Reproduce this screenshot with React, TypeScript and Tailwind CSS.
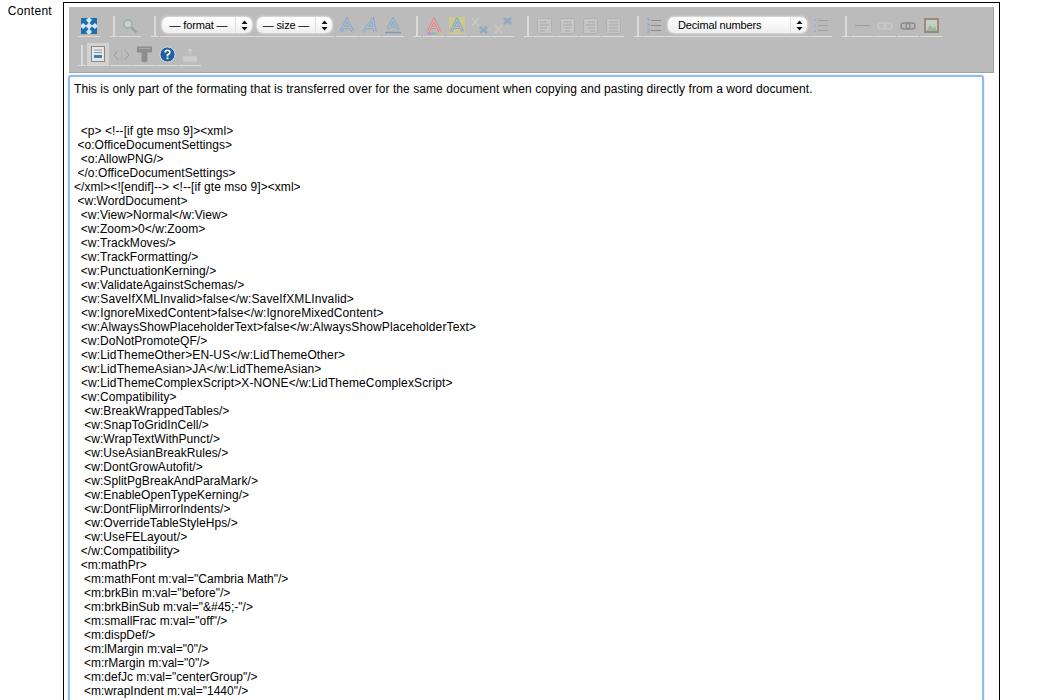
const lines = [
  "",
  "",
  "  <p> <!--[if gte mso 9]><xml>",
  " <o:OfficeDocumentSettings>",
  "  <o:AllowPNG/>",
  " </o:OfficeDocumentSettings>",
  "</xml><![endif]--> <!--[if gte mso 9]><xml>",
  " <w:WordDocument>",
  "  <w:View>Normal</w:View>",
  "  <w:Zoom>0</w:Zoom>",
  "  <w:TrackMoves/>",
  "  <w:TrackFormatting/>",
  "  <w:PunctuationKerning/>",
  "  <w:ValidateAgainstSchemas/>",
  "  <w:SaveIfXMLInvalid>false</w:SaveIfXMLInvalid>",
  "  <w:IgnoreMixedContent>false</w:IgnoreMixedContent>",
  "  <w:AlwaysShowPlaceholderText>false</w:AlwaysShowPlaceholderText>",
  "  <w:DoNotPromoteQF/>",
  "  <w:LidThemeOther>EN-US</w:LidThemeOther>",
  "  <w:LidThemeAsian>JA</w:LidThemeAsian>",
  "  <w:LidThemeComplexScript>X-NONE</w:LidThemeComplexScript>",
  "  <w:Compatibility>",
  "   <w:BreakWrappedTables/>",
  "   <w:SnapToGridInCell/>",
  "   <w:WrapTextWithPunct/>",
  "   <w:UseAsianBreakRules/>",
  "   <w:DontGrowAutofit/>",
  "   <w:SplitPgBreakAndParaMark/>",
  "   <w:EnableOpenTypeKerning/>",
  "   <w:DontFlipMirrorIndents/>",
  "   <w:OverrideTableStyleHps/>",
  "   <w:UseFELayout/>",
  "  </w:Compatibility>",
  "  <m:mathPr>",
  "   <m:mathFont m:val=\"Cambria Math\"/>",
  "   <m:brkBin m:val=\"before\"/>",
  "   <m:brkBinSub m:val=\"&#45;-\"/>",
  "   <m:smallFrac m:val=\"off\"/>",
  "   <m:dispDef/>",
  "   <m:lMargin m:val=\"0\"/>",
  "   <m:rMargin m:val=\"0\"/>",
  "   <m:defJc m:val=\"centerGroup\"/>",
  "   <m:wrapIndent m:val=\"1440\"/>",
];

function trackFor(line: string) {
  if (line.includes("<m:")) return "";
  if (line.includes("</w:") && line.trim().length > 24) return "tracking-[0.12px]";
  return "tracking-[0.06px]";
}

// one toolbar slot with the pale underline
function Slot({ active, children }: { active?: boolean; children?: React.ReactNode }) {
  return (
    <div
      className={`mr-[1px] flex w-[22px] shrink-0 items-center justify-center border-b border-[#dcdcdc] ${
        active ? "-mt-[1px] h-[23px] bg-[#d2d2d2]" : "h-[22px]"
      }`}
    >
      {children}
    </div>
  );
}

function Sep() {
  return (
    <div className="mr-[1px] flex h-[22px] w-[8px] shrink-0 justify-center border-b border-[#dcdcdc] pt-[1px]">
      <div className="h-[20px] w-[2px] bg-[#dadada]" />
    </div>
  );
}

function Gap({ w }: { w: "1" | "9" }) {
  return <div className={w === "1" ? "w-[1px] shrink-0" : "w-[9px] shrink-0"} />;
}

function Pick({ label, width, left }: { label: string; width: string; left?: boolean }) {
  return (
    <div className="mr-[1px] h-[22px] shrink-0 border-b border-[#dcdcdc] px-[2px] pt-[2px]">
      <div
        className={`flex h-[16px] items-center rounded-[6px] bg-gradient-to-b from-[#ffffff] via-[#f8f8f8] to-[#ededed] text-[11px] tracking-[-0.15px] text-black shadow-[0_0_3px_#ffffff] ${width}`}
      >
        <span className={`flex-1 ${left ? "pl-[10px]" : "text-center"}`}>{label}</span>
        <span className="flex h-full w-[17px] items-center justify-center border-l border-[#dedede]">
          <svg width="7" height="11" viewBox="0 0 7 11">
            <path d="M3.5 0.5 L6.5 4 H0.5Z M3.5 10.5 L6.5 7 H0.5Z" fill="#111" />
          </svg>
        </span>
      </div>
    </div>
  );
}

function LetterA({ variant }: { variant: "bold" | "italic" | "under" | "red" | "hilite" }) {
  const stroke = variant === "red" ? "#d68f91" : "#8ea9c0";
  const inner = variant === "red" ? "#e3b6b6" : "#b4c6d4";
  const t = variant === "italic" ? "skewX(-16) translate(3.5 0)" : undefined;
  const d = variant === "under" ? "M3.5 12.5 L9 2.5 L14.5 12.5 M6 9 H12" : "M3 15 L9 2.5 L15 15 M5.5 10.5 H12.5";
  return (
    <svg width="18" height="18" viewBox="0 0 18 18" className="blur-[0.35px]">
      {variant === "hilite" && <rect x="1" y="0" width="16" height="17" fill="#cdc98d" />}
      <g transform={t} fill="none">
        <path d={d} stroke={stroke} strokeWidth="3" />
        <path d={d} stroke={inner} strokeWidth="0.9" />
      </g>
      {variant === "under" && <path d="M1 15.5 H17" stroke="#8098b0" strokeWidth="1.6" />}
      {variant === "red" && (
        <g strokeWidth="2">
          <path d="M2 16.5 H6" stroke="#c68ac4" />
          <path d="M6 16.5 H10" stroke="#8ab0c8" />
          <path d="M10 16.5 H13" stroke="#9cc48c" />
          <path d="M13 16.5 H16" stroke="#d0c070" />
        </g>
      )}
    </svg>
  );
}

function Script({ sup }: { sup?: boolean }) {
  return (
    <svg width="18" height="18" viewBox="0 0 18 18" fill="none" className="blur-[0.35px]">
      <path d={sup ? "M1 8 L8 16 M8 8 L1 16" : "M1 1 L8 9 M8 1 L1 9"} stroke="#cacaca" strokeWidth="1.5" />
      <path d={sup ? "M10 1 L17 7 M17 1 L10 7" : "M9 10 L16 16 M16 10 L9 16"} stroke="#8ea9c0" strokeWidth="2.6" />
    </svg>
  );
}

function Align({ kind }: { kind: "l" | "c" | "r" | "j" }) {
  const rows = {
    l: "M3 4 H10 M3 7 H12 M3 10 H10 M3 13 H8",
    c: "M4 4 H11 M3 7 H12 M4 10 H11 M5 13 H10",
    r: "M5 4 H12 M3 7 H12 M5 10 H12 M7 13 H12",
    j: "M3 4 H12 M3 7 H12 M3 10 H12 M3 13 H12",
  };
  return (
    <svg width="15" height="16" viewBox="0 0 15 16" className="blur-[0.3px]">
      <rect x="0.5" y="0.5" width="14" height="15" rx="1" fill="#c6c6c6" stroke="#b0b0b0" />
      <path d={rows[kind]} stroke="#a8a8a8" strokeWidth="1" />
    </svg>
  );
}

function ListIcon({ numbered }: { numbered?: boolean }) {
  const ink = numbered ? "#8a8a8a" : "#a0a0a0";
  return (
    <svg width="16" height="15" viewBox="0 0 16 15">
      {numbered ? (
        <path d="M1 1 H3 V3 M1 6 H3 V8 H1 M1 11 H3 V14 H1" fill="none" stroke="#8ea9c0" strokeWidth="1.2" />
      ) : (
        <path d="M1 2 H3 M1 7.5 H3 M1 13 H3" stroke="#9ab2c6" strokeWidth="2" />
      )}
      <path d="M5 2.5 H15 M5 7.5 H15 M5 12.5 H15" stroke={ink} strokeWidth="1" />
    </svg>
  );
}

function Toolbar() {
  return (
    <div className="flex h-[66px] flex-col gap-[7px] border-b border-r border-[#a2a2a2] bg-[#bbbbbb] pl-[9px] pt-[8px]">
      <div className="flex items-start">
        <Slot>
          <svg width="16" height="16" viewBox="0 0 16 16">
            <rect width="16" height="16" fill="#d9e7f2" />
            <path d="M0 0 H7 L5 2 L7.5 5 L5 7.5 L2 5 L0 7Z M16 0 V7 L14 5 L11 7.5 L8.5 5 L11 2 L9 0Z M0 16 V9 L2 11 L5 8.5 L7.5 11 L5 14 L7 16Z M16 16 H9 L11 14 L8.5 11 L11 8.5 L14 11 L16 9Z" fill="#1f6fb0" />
          </svg>
        </Slot>
        <Gap w="9" />
        <Sep />
        <Slot>
          <svg width="16" height="16" viewBox="0 0 16 16" fill="none">
            <circle cx="6" cy="6" r="4" fill="#c4d2d0" stroke="#a2aaa8" strokeWidth="1.4" />
            <path d="M9 9 L14.5 14.5" stroke="#a0a0a0" strokeWidth="2.2" />
          </svg>
        </Slot>
        <Gap w="9" />
        <Sep />
        <Pick label="— format —" width="w-[90px]" />
        <Pick label="— size —" width="w-[75px]" />
        <Gap w="1" />
        <Slot><LetterA variant="bold" /></Slot>
        <Slot><LetterA variant="italic" /></Slot>
        <Slot><LetterA variant="under" /></Slot>
        <div className="w-[8px] shrink-0" />
        <Sep />
        <Gap w="1" />
        <Slot><LetterA variant="red" /></Slot>
        <Slot><LetterA variant="hilite" /></Slot>
        <Slot><Script /></Slot>
        <Slot><Script sup /></Slot>
        <Gap w="9" />
        <Sep />
        <Slot><Align kind="l" /></Slot>
        <Slot><Align kind="c" /></Slot>
        <Slot><Align kind="r" /></Slot>
        <Slot><Align kind="j" /></Slot>
        <Gap w="9" />
        <Sep />
        <Slot><ListIcon numbered /></Slot>
        <Pick label="Decimal numbers" width="w-[139px]" left />
        <Slot><ListIcon /></Slot>
        <Gap w="9" />
        <Sep />
        <Slot><div className="h-[1px] w-[15px] bg-[#9c9c9c]" /></Slot>
        <Slot>
          <svg width="16" height="8" viewBox="0 0 16 8" fill="none" stroke="#c8c8c8" strokeWidth="1.5">
            <rect x="1" y="1" width="8" height="6" rx="3" />
            <rect x="7" y="1" width="8" height="6" rx="3" />
          </svg>
        </Slot>
        <Slot>
          <svg width="16" height="8" viewBox="0 0 16 8" fill="none" stroke="#8c8c8c" strokeWidth="1.4">
            <rect x="1" y="1" width="9" height="6" rx="3" />
            <rect x="6" y="1" width="9" height="6" rx="3" />
          </svg>
        </Slot>
        <Slot>
          <svg width="15" height="15" viewBox="0 0 15 15">
            <rect x="1" y="1" width="13" height="13" fill="#c4cfc8" stroke="#9a8a78" strokeWidth="2" />
            <path d="M2 13 L6 7 L9 10 L11 8 L13 13Z" fill="#9db8a0" />
          </svg>
        </Slot>
      </div>
      <div className="flex items-start">
        <Sep />
        <Slot active>
          <svg width="14" height="16" viewBox="0 0 14 16">
            <rect x="0.5" y="0.5" width="13" height="15" fill="#e6e6e6" stroke="#8a8a8a" />
            <path d="M3 4 H11 M3 6.5 H11" stroke="#9a9a9a" />
            <rect x="3" y="9" width="8" height="3" fill="#3f80b6" />
          </svg>
        </Slot>
        <Slot>
          <svg width="17" height="14" viewBox="0 0 17 14" fill="none" stroke="#9a9a9a" strokeWidth="1">
            <path d="M5 2.5 L1 7 L5 11.5 M12 2.5 L16 7 L12 11.5" />
            <path d="M8.5 1 V13" stroke="#b0b0b0" />
          </svg>
        </Slot>
        <Slot>
          <svg width="17" height="17" viewBox="0 0 17 17" className="blur-[0.5px]">
            <path d="M1 1.5 Q1 0.5 2 0.5 H15 Q16 0.5 16 1.5 V5.5 Q16 6.5 15 6.5 H11.5 V15 Q8.5 17.5 5.5 15 V6.5 H2 Q1 6.5 1 5.5Z" fill="#8c8c8c" />
            <path d="M3 2.5 H14" stroke="#a8a8a8" strokeWidth="1.2" />
          </svg>
        </Slot>
        <Slot>
          <svg width="17" height="17" viewBox="0 0 18 18">
            <circle cx="9" cy="9" r="8" fill="#1d5f9f" stroke="#d6e4ef" />
            <path d="M6.5 7 Q6.5 4.5 9 4.5 Q11.5 4.5 11.5 6.8 Q11.5 8.2 9 9.4 V11" fill="none" stroke="#fff" strokeWidth="1.8" />
            <rect x="8" y="12" width="2" height="2" fill="#fff" />
          </svg>
        </Slot>
        <Slot>
          <svg width="16" height="16" viewBox="0 0 16 16" fill="#cdcdcd" stroke="#c2c2c2">
            <rect x="1" y="9" width="14" height="6" />
            <path d="M8 1 L11 4 H9 V7 H7 V4 H5Z" />
          </svg>
        </Slot>
      </div>
    </div>
  );
}

export default function App() {
  return (
    <div className="flex h-[700px] overflow-hidden bg-white font-['Liberation_Sans',Arial,sans-serif] text-[12px] leading-[14px] text-black">
      <div className="w-[63px] shrink-0 pr-[11px] pt-[4px] text-right tracking-[0.3px]">Content</div>
      <div className="mt-[2px] h-[720px] w-[937px] shrink-0 border border-black pl-[5px] pr-[5px] pt-[4px]">
        <Toolbar />
        <div className="-ml-[1px] mt-[2px] h-[700px] w-[916px] rounded-[3px] border-[2px] border-[#8dbcee] pl-[4px] pt-[5px] shadow-[0_0_2px_#b8d4f2]">
          <div className="tracking-[0.065px]">This is only part of the formating that is transferred over for the same document when copying and pasting directly from a word document.</div>
          {lines.map((l, i) => (
            <div key={i} className={`h-[14px] whitespace-pre ${trackFor(l)}`}>{l}</div>
          ))}
        </div>
      </div>
    </div>
  );
}
